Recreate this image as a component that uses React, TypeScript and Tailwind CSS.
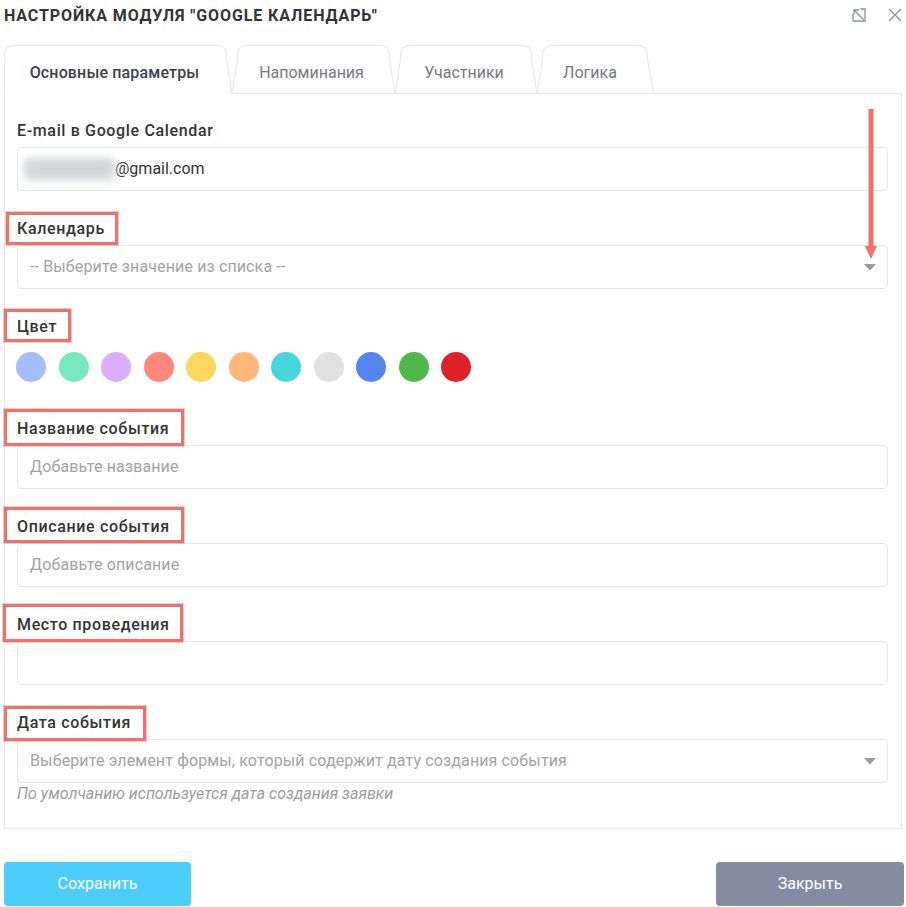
import React from "react";

type TabDef = { label: string; w: number; sl: number; sr: number; pr: number; active?: boolean };

const tabs: TabDef[] = [
  { label: "Основные параметры", w: 228, sl: 0, sr: 5, pr: 7, active: true },
  { label: "Напоминания", w: 163, sl: 5, sr: 5, pr: 4 },
  { label: "Участники", w: 142, sl: 5, sr: 5, pr: 4 },
  { label: "Логика", w: 117, sl: 5, sr: 6, pr: 11 },
];

function TabShape({ w, sl, sr, active }: { w: number; sl: number; sr: number; active?: boolean }) {
  const r = 10;
  const l0 = 0.5;
  const lx = sl + 0.5;
  const rx = w - sr - 0.5;
  const r0 = w - 0.5;
  const open = `M${l0},48 C${l0 + sl * 0.3},30 ${lx},22 ${lx},${r} Q${lx},0.5 ${lx + r},0.5 L${rx - r},0.5 Q${rx},0.5 ${rx},${r} C${rx},22 ${r0 - sr * 0.3},30 ${r0},48`;
  const fill = `${open} L${r0},49 L${l0},49 Z`;
  return (
    <svg className="absolute left-0 top-0" width={w} height={49} viewBox={`0 0 ${w} 49`}>
      <path d={active ? fill : `${open} Z`} fill="#ffffff" />
      <path d={open} fill="none" stroke="#e3e7ee" strokeWidth={1} />
    </svg>
  );
}

function Caret() {
  return (
    <svg width="12" height="7" viewBox="0 0 12 7" className="shrink-0">
      <path d="M0 0 L12 0 L6 6.5 Z" fill="#9b9b9b" />
    </svg>
  );
}

type BoxSpec = { top: number; left: number; w: number; h: number };

function Label({ text, box }: { text: string; box?: BoxSpec }) {
  return (
    <div className="relative h-[20px] mb-[6px] leading-[20px] text-[16px] font-medium tracking-[0.65px] text-[#333333]">
      {box && (
        <div
          className="absolute border-[3px] border-[#f1706b] outline outline-1 outline-[#c7a98f]/50"
          style={{ top: box.top, left: box.left, width: box.w, height: box.h }}
        />
      )}
      <span className="relative">{text}</span>
    </div>
  );
}

function Input({ children, select }: { children?: React.ReactNode; select?: boolean }) {
  return (
    <div className="h-[44px] border border-[#e5e7eb] rounded-[4px] flex items-center pl-[12px] pr-[11px] text-[16px] tracking-[0.13px] bg-white">
      <div className="flex-1 min-w-0 flex items-center">{children}</div>
      {select && <Caret />}
    </div>
  );
}

const colors = [
  "#a4bdfc",
  "#7ae7bf",
  "#dbadff",
  "#ff887c",
  "#fbd75b",
  "#ffb878",
  "#46d6db",
  "#e1e1e1",
  "#5484ed",
  "#51b749",
  "#dc2127",
];

export default function App() {
  return (
    <div className="relative w-[906px] h-[907px] bg-white font-['Roboto',sans-serif] text-[#333333]">
      {/* header */}
      <div className="flex items-start justify-between pl-[4px] pr-[4px] pt-[4px] h-[28px]">
        <div className="text-[16px] leading-[24px] font-bold uppercase tracking-[0.9px] text-[#333333]">
          Настройка модуля "Google Календарь"
        </div>
        <div className="flex items-center gap-[22px] pt-[4px] pr-[0px]">
          <svg width="14" height="14" viewBox="0 0 14 14" fill="none" stroke="#8a92a4" strokeWidth="1.3">
            <path d="M1 5.5 V13 H13 V1 H8.5" />
            <path d="M12 12 L2 2" />
            <path d="M2 7 V2 H7" />
          </svg>
          <svg width="14" height="14" viewBox="0 0 14 14" fill="none" stroke="#8a92a4" strokeWidth="1.3">
            <path d="M1 1 L13 13 M13 1 L1 13" />
          </svg>
        </div>
      </div>

      {/* tabs */}
      <div className="relative z-10 flex pl-[4px] mt-[17px] -mb-px h-[49px]">
        {tabs.map((t) => (
          <div
            key={t.label}
            className="relative h-[49px] shrink-0 flex justify-center pt-[18px]"
            style={{ width: t.w, paddingRight: t.pr }}
          >
            <TabShape w={t.w} sl={t.sl} sr={t.sr} active={t.active} />
            <span
              className={
                t.active
                  ? "relative leading-[20px] text-[16px] font-medium tracking-[0.15px] text-[#3b4150]"
                  : "relative leading-[20px] text-[16px] text-[#747a85]"
              }
            >
              {t.label}
            </span>
          </div>
        ))}
      </div>

      {/* panel */}
      <div className="mx-[4px] border border-[#e6e8ee] pt-[27px] pb-[24px] pl-[12px] pr-[13px]">
        <Label text="E-mail в Google Calendar" />
        <div className="h-[44px] border border-[#e5e7eb] rounded-[4px] flex items-center pl-[6px] text-[16px]">
          <div className="w-[91px] h-[22px] bg-[#d4d6d9] blur-[4px] rounded-[4px]" />
          <span className="text-[#333333]">@gmail.com</span>
        </div>

        <div className="mt-[28px]">
          <Label text="Календарь" box={{ top: -7, left: -11, w: 112, h: 33 }} />
          <Input select>
            <span className="text-[#a3a3a3]">-- Выберите значение из списка --</span>
          </Input>
        </div>

        <div className="mt-[28px]">
          <Label text="Цвет" box={{ top: -8, left: -13, w: 67, h: 33 }} />
          <div className="flex gap-[12.5px] mt-[15px] -ml-[1px]">
            {colors.map((c) => (
              <div key={c} className="w-[30px] h-[30px] rounded-full" style={{ backgroundColor: c }} />
            ))}
          </div>
        </div>

        <div className="mt-[37px]">
          <Label text="Название события" box={{ top: -10, left: -13, w: 180, h: 37 }} />
          <Input>
            <span className="text-[#a3a3a3]">Добавьте название</span>
          </Input>
        </div>

        <div className="mt-[28px]">
          <Label text="Описание события" box={{ top: -10, left: -13, w: 180, h: 36 }} />
          <Input>
            <span className="text-[#a3a3a3]">Добавьте описание</span>
          </Input>
        </div>

        <div className="mt-[28px]">
          <Label text="Место проведения" box={{ top: -11, left: -14, w: 180, h: 38 }} />
          <Input />
        </div>

        <div className="mt-[28px]">
          <Label text="Дата события" box={{ top: -7, left: -13, w: 142, h: 35 }} />
          <Input select>
            <span className="text-[#a3a3a3]">Выберите элемент формы, который содержит дату создания события</span>
          </Input>
          <div className="mt-[1px] text-[16px] leading-[20px] italic text-[#9d9d9d]">
            По умолчанию используется дата создания заявки
          </div>
        </div>
      </div>

      {/* footer */}
      <div className="flex justify-between pl-[4px] pr-[2px] mt-[33px]">
        <button className="w-[187px] h-[44px] rounded-[4px] bg-[#4dcdfe] text-white text-[16px]">Сохранить</button>
        <button className="w-[188px] h-[44px] rounded-[4px] bg-[#838ca3] text-white text-[16px]">Закрыть</button>
      </div>

      {/* annotation arrow */}
      <svg className="absolute left-[865px] top-[108px]" width="12" height="152" viewBox="0 0 12 152">
        <rect x="3.5" y="1" width="5" height="140" fill="#f3706b" />
        <path d="M0 138 L12 138 L6 151 Z" fill="#f3706b" />
      </svg>
    </div>
  );
}
